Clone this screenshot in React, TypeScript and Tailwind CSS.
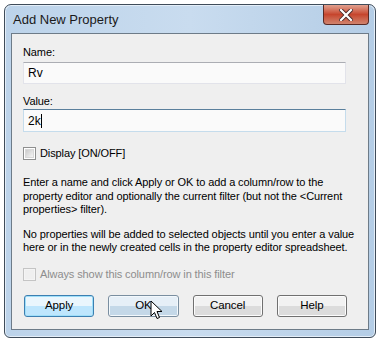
import React from "react";

function CheckBox({ disabled }: { disabled?: boolean }) {
  return (
    <div
      className={
        "w-[13px] h-[13px] border flex items-center justify-center shrink-0 " +
        (disabled ? "border-[#c4c4c4] bg-[#f4f4f4]" : "border-[#8e8f8f] bg-white")
      }
    >
      <div
        className={
          "w-[9px] h-[9px] " +
          (disabled
            ? "bg-[#efefef]"
            : "bg-gradient-to-br from-[#cbcbcb] to-[#f5f5f5] border border-[#d8d8d8]")
        }
      />
    </div>
  );
}

function Btn({ label, kind }: { label: string; kind?: "default" | "hover" }) {
  const base =
    "w-[72px] h-[22px] rounded-[3px] border flex items-center justify-center text-[11.5px] text-black relative overflow-hidden";
  let cls = "";
  let top = "";
  let bottom = "";
  if (kind === "default") {
    cls = "border-[#3c7fb1] shadow-[inset_0_0_0_1px_#9fdff9]";
    top = "bg-[#eaf6fd]";
    bottom = "bg-[#bee6fd]";
  } else if (kind === "hover") {
    cls = "border-[#7a8ea0] shadow-[inset_0_0_0_1px_#f2f8fc]";
    top = "bg-[#e6eff7]";
    bottom = "bg-[#c4d8e8]";
  } else {
    cls = "border-[#707070] shadow-[inset_0_0_0_1px_#fcfcfc]";
    top = "bg-[#f2f2f2]";
    bottom = "bg-[#dcdcdc]";
  }
  return (
    <div className={base + " " + cls}>
      <div className="absolute inset-[1px] flex flex-col">
        <div className={"flex-1 " + top} />
        <div className={"flex-1 " + bottom} />
      </div>
      <span className="relative">{label}</span>
    </div>
  );
}

export default function App() {
  return (
    <div
      className="w-[380px] h-[340px] bg-white pl-[4px] pt-[4px]"
      style={{ fontFamily: '"Liberation Sans", Arial, sans-serif' }}
    >
      <div className="relative w-[372px] h-[334px] border border-[#3f4c5a] rounded-t-[7px] rounded-b-[6px] bg-gradient-to-r from-[#bcd3ea] via-[#c9dcef] to-[#b4cde6] flex flex-col px-[6px] pb-[7px] shadow-[inset_0_0_0_1px_#e4eef8]">
        {/* title bar */}
        <div className="h-[28px] flex items-start shrink-0">
          <div className="pl-[2px] pt-[7px] text-[13px] text-[#1a1a1a] leading-[16px] flex-1">
            Add New Property
          </div>
          <div className="w-[46px] h-[20px] rounded-b-[4px] border border-[#5a2a24] border-t-0 bg-gradient-to-b from-[#e0a08f] via-[#c6452d] to-[#d0836d] flex items-center justify-center">
            <svg width="14" height="12" viewBox="0 0 14 12">
              <path
                d="M2 1 L12 11 M12 1 L2 11"
                stroke="#4a2a2a"
                strokeWidth="4"
                strokeLinecap="square"
              />
              <path
                d="M2 1 L12 11 M12 1 L2 11"
                stroke="#ffffff"
                strokeWidth="2.2"
                strokeLinecap="square"
              />
            </svg>
          </div>
        </div>

        {/* client area */}
        <div className="flex-1 border border-[#6d7b88] bg-[#efefef] pl-[11px] pr-[21px] text-[11px] tracking-[-0.1px] text-black flex flex-col">
          <div className="pt-[12px] leading-[13px]">Name:</div>
          <div className="mt-[3px] h-[22px] w-[323px] border border-[#e2e3ea] border-t-[#abadb3] bg-[#fafafa] flex items-center px-[4px] text-[12px] tracking-normal">
            Rv
          </div>
          <div className="mt-[11px] leading-[13px]">Value:</div>
          <div className="mt-[1px] h-[23px] w-[323px] border border-[#c5dcec] border-t-[#5a7f9c] bg-[#fafafa] flex items-center px-[4px] text-[12px] tracking-normal">
            <span>2k</span>
            <span className="w-[1px] h-[14px] bg-black" />
          </div>

          <div className="mt-[15px] flex items-center gap-[4px] h-[13px]">
            <CheckBox />
            <span>Display [ON/OFF]</span>
          </div>

          <p className="mt-[16px] leading-[13.5px] whitespace-nowrap">
            Enter a name and click Apply or OK to add a column/row to the
            <br />
            property editor and optionally the current filter (but not the &lt;Current
            <br />
            properties&gt; filter).
          </p>
          <p className="mt-[11px] leading-[13.5px] whitespace-nowrap">
            No properties will be added to selected objects until you enter a value
            <br />
            here or in the newly created cells in the property editor spreadsheet.
          </p>

          <div className="mt-[13px] flex items-center gap-[4px] h-[13px] text-[#8d8d8d]">
            <CheckBox disabled />
            <span>Always show this column/row in this filter</span>
          </div>

          <div className="mt-[14px] flex gap-[14px] pl-[1px]">
            <Btn label="Apply" kind="default" />
            <Btn label="OK" kind="hover" />
            <Btn label="Cancel" />
            <Btn label="Help" />
          </div>
        </div>

        {/* mouse cursor */}
        <svg
          className="absolute left-[145px] top-[295px]"
          width="14"
          height="21"
          viewBox="0 0 14 21"
        >
          <path
            d="M1 1 L1 16 L4.5 12.5 L7 18.5 L9.5 17.5 L7 11.5 L12 11.5 Z"
            fill="white"
            stroke="black"
            strokeWidth="1"
            strokeLinejoin="miter"
          />
        </svg>
      </div>
    </div>
  );
}
